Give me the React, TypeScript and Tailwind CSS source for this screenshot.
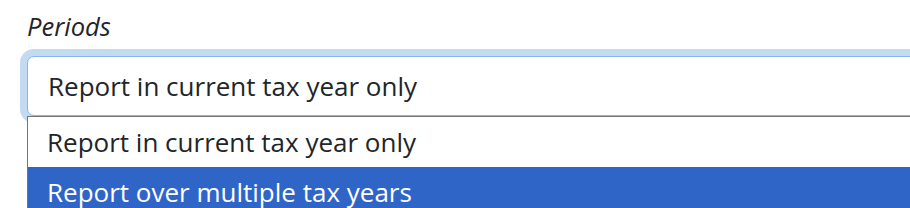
export default function App() {
  const options = ['Report in current tax year only', 'Report over multiple tax years']

  return (
    <div className="w-[910px] h-[208px] overflow-hidden bg-white font-['Open_Sans',sans-serif] text-[#212529]">
      <div className="w-[1000px] pl-[27px] pt-[9px]">
        <label className="block italic text-[25.5px] leading-[34px]">Periods</label>
        <div className="relative mt-[13px]">
          <div className="h-[60px] rounded-[7px] border border-[#86b7e8] bg-white shadow-[0_0_0_7px_#c3daf0] flex items-center pl-[20px] text-[26px]">
            {options[0]}
          </div>
          <div className="absolute left-0 right-0 top-[60px] border border-[#767676] bg-white text-[26px]">
            {options.map((o, i) => (
              <div
                key={o}
                className={
                  i === 1
                    ? 'h-[50px] flex items-center pl-[19px] bg-[#3065c8] text-white'
                    : 'h-[50px] flex items-center pl-[19px]'
                }
              >
                {o}
              </div>
            ))}
          </div>
        </div>
      </div>
    </div>
  )
}
